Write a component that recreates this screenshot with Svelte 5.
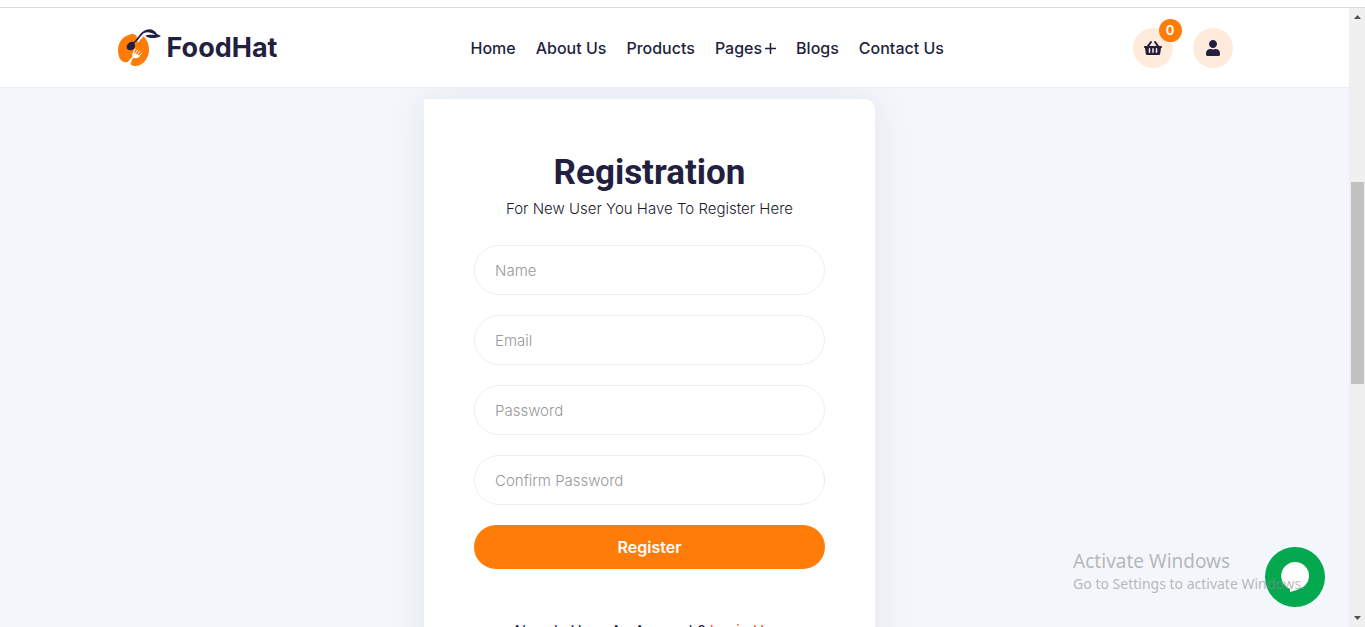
<script>
  const links = ['Home', 'About Us', 'Products', 'Pages', 'Blogs', 'Contact Us'];
  const fields = [
    { id: 'name', label: 'Name', type: 'text' },
    { id: 'email', label: 'Email', type: 'email' },
    { id: 'password', label: 'Password', type: 'password' },
    { id: 'confirm', label: 'Confirm Password', type: 'password' }
  ];
</script>

<div class="page">
  <div class="strip"></div>
  <div class="view">
    <div class="content">
      <header>
        <div class="container bar">
          <a class="logo" href="#home">
            <svg viewBox="0 0 132 120" width="44" height="40" aria-hidden="true">
              <path fill="#ff7c08" d="M59 26C56 17 47 16 36 20C16 26 3 44 3 67C3 88 12 103 25 103C31 103 35 100 39 95L45 100C40 103 40 109 43 111C49 115 60 115 69 111C86 103 96 85 96 66C96 49 91 37 80 25L62 44Z" />
              <path fill="none" stroke="#fff" stroke-width="5" d="M34 105C39 95 43 94 50 86" />
              <path fill="#fff" d="M48 73L69 84C64 91 56 92 51 89L46 84Q45 79 48 73Z" />
              <path fill="none" stroke="#fff" stroke-width="3" stroke-linecap="round" d="M49 75L54 63M55 76L62 66M61 80L69 70M66 84L74 76" />
              <path fill="#231f40" d="M52 45C58 56 51 67 40 67C30 67 26 58 32 49C37 41 45 40 51 42C62 31 67 18 79 10C94 0 111 2 120 18L132 24C117 33 94 32 85 23C93 19 105 21 115 21C103 13 91 10 80 16C70 23 65 38 52 45Z" />
            </svg>
            <span>FoodHat</span>
          </a>
          <nav>
            {#each links as link}
              <a href="#menu">{link}{#if link === 'Pages'}<svg class="plus" viewBox="0 0 11 11" width="11" height="11" aria-hidden="true"><path d="M5.5 0V11M0 5.5H11" stroke="currentColor" stroke-width="1.5" /></svg>{/if}</a>
            {/each}
          </nav>
          <div class="actions">
            <a class="round" href="#cart" aria-label="Cart">
              <svg viewBox="0 0 576 512" width="18" height="16" aria-hidden="true"><path fill="currentColor" d="M576 216v16c0 13.255-10.745 24-24 24h-8l-26.113 182.788C514.509 462.435 494.257 480 470.37 480H105.63c-23.887 0-44.139-17.565-47.518-41.212L32 256h-8c-13.255 0-24-10.745-24-24v-16c0-13.255 10.745-24 24-24h67.341l106.78-146.821c10.395-14.292 30.407-17.453 44.701-7.058 14.293 10.395 17.453 30.408 7.058 44.701L170.477 192h235.046L326.12 82.821c-10.395-14.292-7.234-34.306 7.059-44.701 14.291-10.395 34.306-7.235 44.701 7.058L484.659 192H552c13.255 0 24 10.745 24 24zM312 392V280c0-13.255-10.745-24-24-24s-24 10.745-24 24v112c0 13.255 10.745 24 24 24s24-10.745 24-24zm112 0V280c0-13.255-10.745-24-24-24s-24 10.745-24 24v112c0 13.255 10.745 24 24 24s24-10.745 24-24zm-224 0V280c0-13.255-10.745-24-24-24s-24 10.745-24 24v112c0 13.255 10.745 24 24 24s24-10.745 24-24z" /></svg>
              <span class="count">0</span>
            </a>
            <a class="round" href="#account" aria-label="Account">
              <svg viewBox="0 0 448 512" width="14" height="16" aria-hidden="true"><path fill="currentColor" d="M224 256c70.7 0 128-57.300 128-128S294.700 0 224 0 96 57.300 96 128s57.300 128 128 128zm89.600 32h-16.700c-22.200 10.200-46.900 16-72.900 16s-50.600-5.800-72.900-16h-16.700C60.200 288 0 348.200 0 422.400V464c0 26.500 21.500 48 48 48h352c26.500 0 48-21.500 48-48v-41.600c0-74.200-60.200-134.400-134.400-134.400z" /></svg>
            </a>
          </div>
        </div>
      </header>
      <main>
        <form class="card" onsubmit={(e) => e.preventDefault()}>
          <h1>Registration</h1>
          <p class="lead">For New User You Have To Register Here</p>
          {#each fields as f}
            <input id={f.id} type={f.type} placeholder={f.label} aria-label={f.label} />
          {/each}
          <button type="submit">Register</button>
          <p class="foot">Already Have An Account ? <a href="#login">Login Here</a></p>
        </form>
      </main>
    </div>
    <div class="scroll" aria-hidden="true">
      <svg viewBox="0 0 7 4" width="7" height="4"><path fill="#505050" d="M0 4L3.500 0L7 4Z" /></svg>
      <div class="track"><div class="thumb"></div></div>
      <svg viewBox="0 0 7 4" width="7" height="4"><path fill="#505050" d="M0 0L3.500 4L7 0Z" /></svg>
    </div>
  </div>
  <button class="chat" aria-label="Open chat">
    <svg viewBox="0 0 30 30" width="30" height="30" aria-hidden="true"><path fill="#fff" d="M15 0A14 14 0 0 1 29 14C29 22 23 27 10 30V27A14 14 0 0 1 15 0Z" /></svg>
  </button>
  <div class="notice">
    <div class="big">Activate Windows</div>
    <div>Go to Settings to activate Windows.</div>
  </div>
</div>

<style>
  :global(body) { margin: 0; }
  .page, .page * { box-sizing: border-box; }
  .page {
    position: relative;
    height: 100vh;
    overflow: hidden;
    display: flex;
    flex-direction: column;
    background: #fff;
    color: #231f40;
    font: 400 16px/24px Inter, sans-serif;
  }
  a { color: inherit; text-decoration: none; }
  .strip { flex: none; height: 8px; border-bottom: 1px solid #dadada; }
  .view { flex: 1; min-height: 0; display: flex; }
  .content { flex: 1; min-width: 0; display: flex; flex-direction: column; background: #f3f6fb; }
  header { flex: none; background: #fff; border-bottom: 1px solid #ebeef2; }
  .container { max-width: 1116px; margin: 0 auto; }
  .bar { display: grid; grid-template-columns: 354px 1fr auto; align-items: center; padding: 20px 0 19px; }
  .logo { display: flex; align-items: center; gap: 6px; font-size: 27px; font-weight: 700; }
  nav { display: flex; gap: 20px; font-weight: 500; }
  nav a { white-space: nowrap; }
  .plus { margin-left: 3px; }
  .actions { display: flex; justify-content: flex-end; gap: 20px; }
  .round { position: relative; width: 40px; height: 40px; border-radius: 50%; background: #ffebdb; display: grid; place-items: center; }
  .count { position: absolute; top: -9px; right: -9px; width: 23px; height: 23px; border-radius: 50%; background: #ff7c08; color: #fff; font-size: 13px; line-height: 23px; font-weight: 600; text-align: center; }
  main { flex: 1; min-height: 0; overflow: hidden; padding: 11px 50px 0 0; }
  .card { max-width: 451px; margin: 0 auto; padding: 50px; min-height: 600px; background: #fff; border-radius: 0 10px 10px 0; box-shadow: 0 0 40px rgba(35, 50, 80, 0.08); display: flex; flex-direction: column; text-align: center; }
  h1 { margin: 0; font: 700 35px/48px Roboto, sans-serif; }
  p { margin: 0; font-weight: 300; }
  .lead { margin: 0 0 24px; font-size: 15px; color: #1b1b30; }
  input { width: 100%; height: 50px; margin: 0 0 20px; padding: 0 20px; border: 1px solid #eee; border-radius: 30px; background: #fff; font: 300 15px Inter, sans-serif; outline: none; }
  input::placeholder { color: #999; opacity: 1; }
  .card button { height: 44px; border: 0; border-radius: 30px; background: #ff7c08; color: #fff; font: 600 16px Inter, sans-serif; }
  .foot { margin-top: 50px; font-size: 15px; font-weight: 400; }
  .foot a { color: #ff4b2b; }
  .scroll { flex: none; width: 16px; background: #f0f0f0; display: flex; flex-direction: column; align-items: center; padding: 7px 0; }
  .track { flex: 1; width: 13px; padding: 163px 0 0; }
  .thumb { height: 202px; background: #c1c1c1; }
  .chat { position: absolute; right: 40px; bottom: 20px; width: 60px; height: 60px; padding: 0; border: 0; border-radius: 50%; background: #04a84e; display: grid; place-items: center; }
  .notice { position: absolute; right: 60px; bottom: 33px; color: rgba(140, 140, 140, 0.6); font: 400 14px/20px "Noto Sans", "Open Sans", sans-serif; pointer-events: none; }
  .big { font-size: 19px; line-height: 26px; }
</style>
